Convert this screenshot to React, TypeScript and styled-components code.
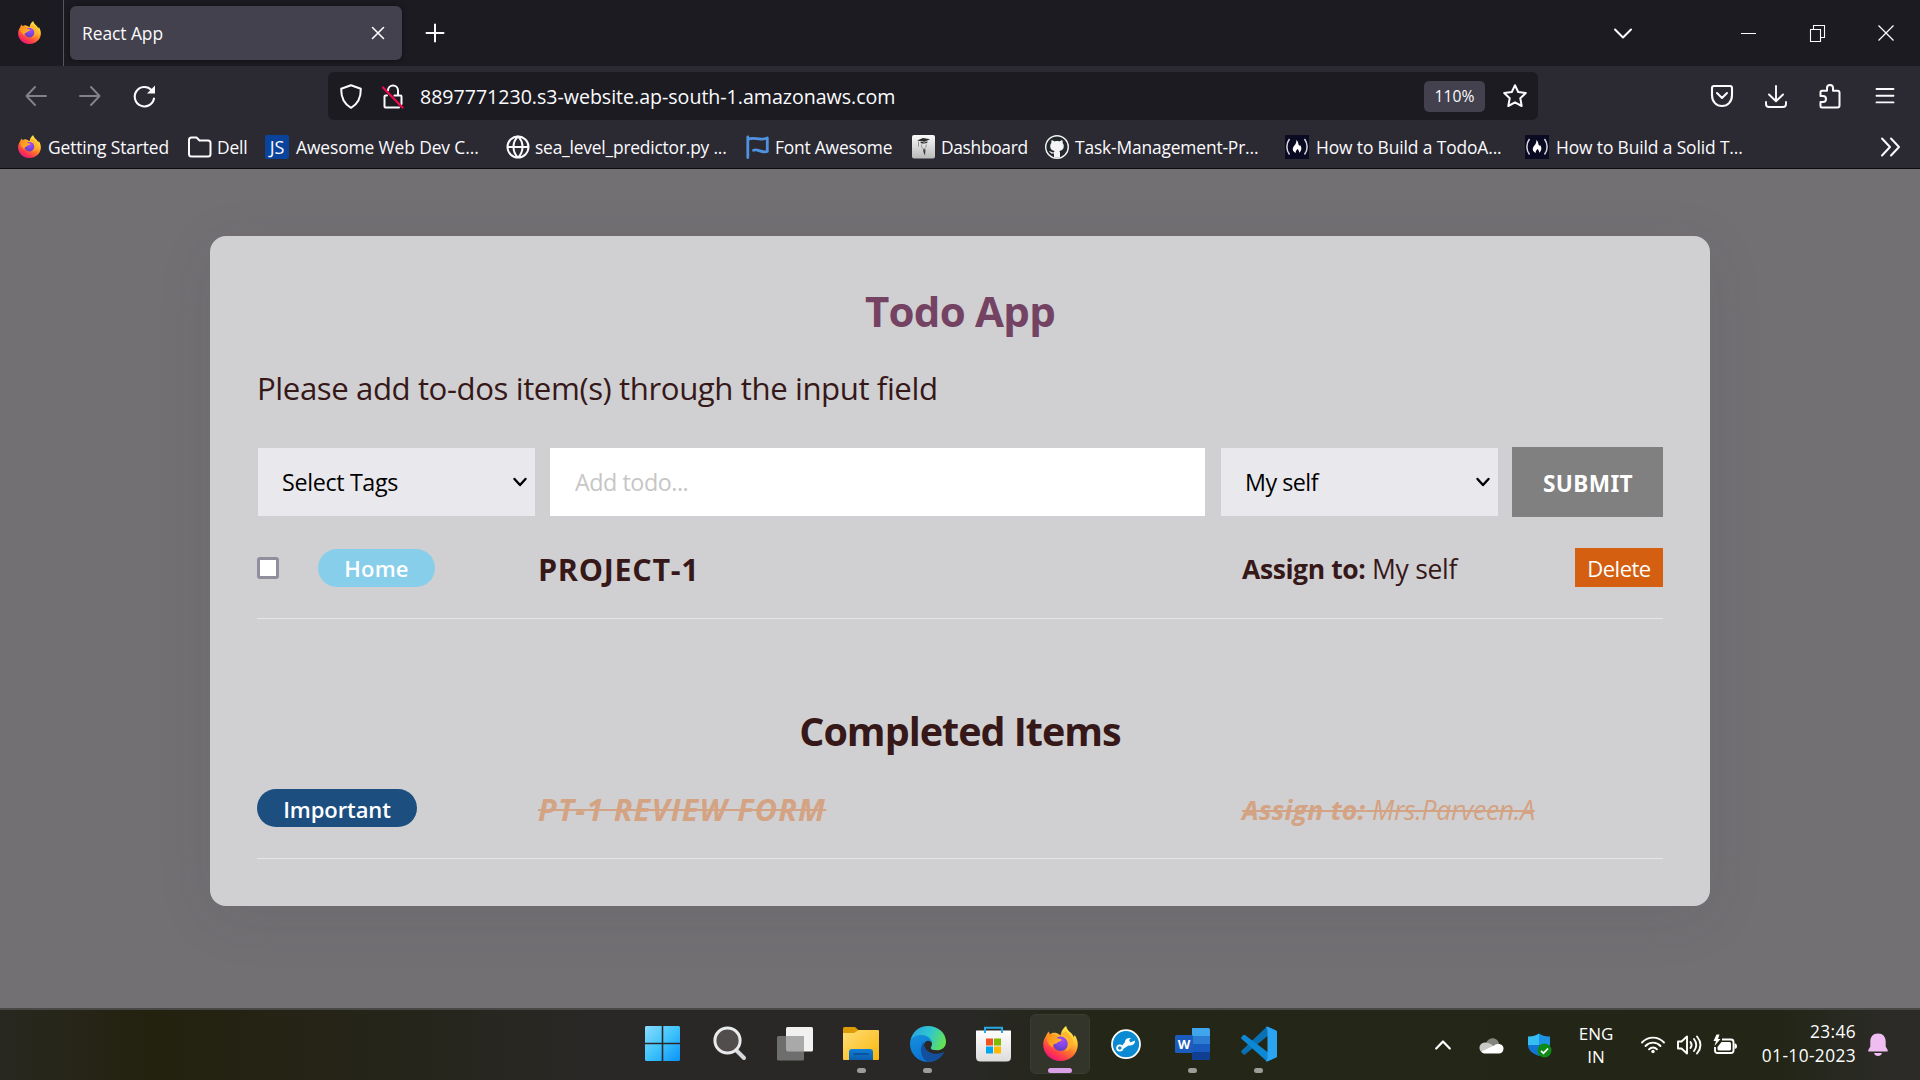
import React from 'react';
import styled, { createGlobalStyle, css } from 'styled-components';

const GlobalStyle = createGlobalStyle`
  * { box-sizing: border-box; }
  body { margin: 0; overflow: hidden; background: #727073; font-family: "Open Sans", "Noto Sans", sans-serif; }
  h1, h2, p { margin: 0; }
  svg { display: block; flex: none; overflow: visible; }
`;

/* ---------- shared ---------- */
const Screen = styled.div`
  width: 1920px;
  height: 1080px;
  display: flex;
  flex-direction: column;
`;

const Label = styled.span<{ $size: number; $ls?: number }>`
  font-size: ${(p) => p.$size}px;
  letter-spacing: ${(p) => p.$ls ?? 0}px;
  white-space: nowrap;
`;

const Cell = styled.div<{ $w: number; $dim?: boolean }>`
  width: ${(p) => p.$w}px;
  height: 100%;
  flex: none;
  display: flex;
  align-items: center;
  justify-content: center;
  opacity: ${(p) => (p.$dim ? 0.42 : 1)};
`;

/* ---------- browser chrome ---------- */
const TabBar = styled.header`
  height: 66px;
  background: #1c1b22;
  color: #fbfbfe;
  display: flex;
  align-items: center;
`;

const Pinned = styled.div`
  width: 64px;
  height: 66px;
  padding: 21px 0 0 18px;
  border-right: 1px solid #55545c;
`;

const Tab = styled.div`
  width: 332px;
  height: 54px;
  margin-left: 6px;
  padding: 0 17px 0 12px;
  border-radius: 6px;
  background: #42414d;
  box-shadow: 0 0 5px rgba(0, 0, 0, 0.5);
  display: flex;
  align-items: center;
  justify-content: space-between;
`;

const ListTabs = styled(Cell)`
  margin-left: auto;
  margin-right: 67px;
`;

const NavBar = styled.nav`
  height: 60px;
  padding: 0 9px;
  background: #2b2a33;
  color: #fbfbfe;
  display: flex;
  align-items: center;
`;

const UrlBar = styled.div`
  width: 1210px;
  height: 48px;
  margin-left: 157px;
  margin-right: auto;
  padding-left: 2px;
  border-radius: 6px;
  background: #1c1b22;
  display: flex;
  align-items: center;
`;

const Url = styled(Label)`
  margin-left: 6px;
  padding-top: 1px;
  flex: 1;
`;

const ZoomChip = styled.div`
  width: 61px;
  height: 31px;
  margin-right: 7px;
  border-radius: 5px;
  background: #42414d;
  display: flex;
  align-items: center;
  justify-content: center;
`;

const Bookmarks = styled.div`
  height: 43px;
  padding: 0 18px 1px;
  background: #2b2a33;
  border-bottom: 1px solid #0c0c0d;
  color: #fbfbfe;
  display: flex;
  align-items: center;
`;

const Bookmark = styled.div<{ $w: number; $gap?: number }>`
  width: ${(p) => p.$w}px;
  display: flex;
  align-items: center;
  gap: ${(p) => p.$gap ?? 6}px;
`;

const MarkLabel = styled(Label)`
  padding-top: 1px;
`;

const JsTile = styled.div`
  width: 24px;
  height: 24px;
  border-radius: 2px;
  background: #0a439b;
  display: flex;
  align-items: center;
  justify-content: center;
  font-size: 18px;
  flex: none;
`;

const More = styled.div`
  margin-left: auto;
  padding-right: 1px;
`;

/* ---------- page ---------- */
const Page = styled.main`
  flex: 1;
  padding-top: 67px;
  display: flex;
  justify-content: center;
  align-items: flex-start;
`;

const Card = styled.section`
  width: 1500px;
  height: 670px;
  padding: 46px 47px 47px;
  border-radius: 16px;
  background: #d0d0d2;
  color: #371819;
  box-shadow: 0 12px 60px rgba(56, 58, 62, 0.09);
`;

const Title = styled.h1`
  font-size: 42px;
  line-height: 58px;
  letter-spacing: -0.75px;
  text-align: center;
  color: #744263;
`;

const Hint = styled.p`
  margin-top: 24px;
  font-size: 31.2px;
  line-height: 48px;
  letter-spacing: -0.42px;
`;

const Form = styled.form`
  height: 70px;
  margin: 35px 0 0 1px;
  display: grid;
  grid-template-columns: 277px 1fr 277px 151px;
  column-gap: 15px;
  align-items: center;
`;

const field = css`
  height: 68px;
  padding: 0 8px 0 25px;
  display: flex;
  align-items: center;
  justify-content: space-between;
`;

const Select = styled.div<{ $shift?: number }>`
  ${field}
  margin-left: ${(p) => p.$shift ?? 0}px;
  margin-right: -${(p) => p.$shift ?? 0}px;
  padding-left: 24px;
  background: #e9e9ed;
  color: #000;
`;

const Input = styled.input`
  ${field}
  width: 100%;
  border: 0;
  background: #fff;
  font: 23.3px "Open Sans", "Noto Sans", sans-serif;
  letter-spacing: -0.45px;
  &::placeholder { color: #c6c6c6; opacity: 1; }
`;

const Submit = styled.button`
  height: 70px;
  border: 0;
  padding: 2px 0 0 1px;
  background: #808080;
  color: #fff;
  font: 700 22.6px "Noto Sans", sans-serif;
  letter-spacing: 0.4px;
`;

const Item = styled.div<{ $h: number }>`
  height: ${(p) => p.$h}px;
  border-bottom: 1px solid #e6e6e8;
  display: grid;
  grid-template-columns: 281px 703px 1fr;
  align-items: center;
`;

const TagCell = styled.div`
  display: flex;
  align-items: center;
`;

const Check = styled.span`
  width: 22px;
  height: 22px;
  margin-right: 39px;
  border: 3px solid #8f8f9d;
  border-radius: 3px;
  background: #fff;
`;

const Pill = styled.span<{ $w: number; $bg: string; $ls: number; $drop?: number }>`
  width: ${(p) => p.$w}px;
  height: 38px;
  border-radius: 19px;
  background: ${(p) => p.$bg};
  color: #fff;
  font-size: 22px;
  font-weight: 600;
  letter-spacing: ${(p) => p.$ls}px;
  line-height: 39px;
  padding-top: ${(p) => p.$drop ?? 0}px;
  text-align: center;
`;

const doneStyle = css`
  color: #d3a383;
  font-style: italic;
  text-decoration: line-through;
  text-decoration-thickness: 2px;
`;

const Task = styled.div<{ $done?: boolean }>`
  font-size: 30.5px;
  font-weight: 700;
  line-height: 44px;
  padding-top: ${(p) => (p.$done ? 1 : 3)}px;
  letter-spacing: ${(p) => (p.$done ? 1.28 : 0.7)}px;
  ${(p) => p.$done && doneStyle}
`;

const Assign = styled.div`
  display: flex;
  align-items: center;
  justify-content: space-between;
`;

const Assignee = styled.div<{ $done?: boolean }>`
  font-size: 26.5px;
  line-height: 38px;
  padding: 3px 0 0 1px;
  letter-spacing: -0.3px;
  b { letter-spacing: ${(p) => (p.$done ? 0.27 : -0.4)}px; }
  ${(p) => p.$done && doneStyle}
`;

const Delete = styled.button`
  width: 88px;
  height: 39px;
  padding: 0;
  border: 0;
  background: #d45f10;
  color: #fff;
  font: 22px "Open Sans", "Noto Sans", sans-serif;
  letter-spacing: -0.5px;
`;

const Completed = styled.h2`
  margin-top: 85px;
  padding-top: 1px;
  font-size: 39.5px;
  line-height: 53px;
  letter-spacing: -1px;
  text-align: center;
`;

/* ---------- taskbar ---------- */
const Taskbar = styled.footer`
  height: 72px;
  border-top: 2px solid #484846;
  background: linear-gradient(90deg, #292820 0, #23220f 150px, #26251b 420px, #292827 600px, #292827 960px, #242617 1080px, #232616 1780px, #2c2b28 1890px);
  color: #fff;
  display: flex;
`;

const Apps = styled.div`
  padding: 4px 0 0 632.5px;
  display: flex;
  gap: 6.25px;
`;

const AppCell = styled.div<{ $active?: boolean }>`
  width: 60px;
  height: 60px;
  border-radius: 6px;
  border: 1px solid ${(p) => (p.$active ? '#3b3d31' : 'transparent')};
  background: ${(p) => (p.$active ? '#33352a' : 'transparent')};
  padding-top: 11px;
  display: flex;
  flex-direction: column;
  align-items: center;
  justify-content: space-between;
`;

const Running = styled.i<{ $active?: boolean }>`
  width: ${(p) => (p.$active ? 24 : 9)}px;
  height: 5px;
  border-radius: 3px;
  background: ${(p) => (p.$active ? '#d9a0e6' : '#9c9c98')};
`;

const Nudge = styled.div`
  padding-left: 3px;
`;

const Tray = styled.div`
  margin-left: auto;
  padding: 0 32px 0 0;
  display: flex;
  align-items: center;
`;

const Gap = styled.div<{ $l: number }>`
  margin-left: ${(p) => p.$l}px;
`;

const Lines = styled.div<{ $l: number; $w: number; $align: string; $size: number; $ls: number; $lh: number; $up: number }>`
  width: ${(p) => p.$w}px;
  margin-left: ${(p) => p.$l}px;
  padding-bottom: ${(p) => p.$up}px;
  text-align: ${(p) => p.$align};
  font-size: ${(p) => p.$size}px;
  line-height: ${(p) => p.$lh}px;
  letter-spacing: ${(p) => p.$ls}px;
  white-space: nowrap;
`;

/* ---------- icons ---------- */
type LineProps = { w: number; h: number; d: string; sw?: number; color?: string; round?: boolean };
const Line = ({ w, h, d, sw = 2, color = 'currentColor', round = true }: LineProps) => (
  <svg width={w} height={h} viewBox={`0 0 ${w} ${h}`} fill="none" stroke={color} strokeWidth={sw}
    strokeLinecap={round ? 'round' : 'butt'} strokeLinejoin={round ? 'round' : 'miter'}>
    <path d={d} />
  </svg>
);

const Firefox = ({ size, id }: { size: number; id: string }) => (
  <svg width={size} height={size} viewBox="0 0 34 34">
    <defs>
      <linearGradient id={id + 'a'} x1="0.85" y1="0.05" x2="0.25" y2="1">
        <stop offset="0" stopColor="#fff44f" />
        <stop offset="0.3" stopColor="#ffc233" />
        <stop offset="0.55" stopColor="#ff7a2a" />
        <stop offset="0.8" stopColor="#ff3750" />
        <stop offset="1" stopColor="#eb0f80" />
      </linearGradient>
      <radialGradient id={id + 'b'} cx="0.6" cy="0.25" r="0.8">
        <stop offset="0" stopColor="#a84bf0" />
        <stop offset="0.55" stopColor="#7b45e6" />
        <stop offset="1" stopColor="#5a3fb8" />
      </radialGradient>
      <linearGradient id={id + 'c'} x1="0" y1="0" x2="1" y2="0.6">
        <stop offset="0" stopColor="#ff8a16" />
        <stop offset="1" stopColor="#ffb52e" />
      </linearGradient>
    </defs>
    <path fill={`url(#${id}a)`} d="M3 9.5C3.6 7.6 4.600 6.300 5.800 5.300C5.900 6.600 6.400 7.400 7 7.900C8.500 6.600 10.500 6.200 12 6.600C13.500 6.800 15 7.600 16 8.500L17.500 9C17.300 5.500 19.500 2 22.600 0C22.800 2.500 24.500 4.500 27 6.500C28.500 7.800 29.500 9.500 30 11L30.800 8.800C33 12 34 15.500 33.800 19C33.200 28 26 34 17 34C7.500 34 0.200 27 0.200 18C0.200 14.800 1.200 12 3 9.500Z" />
    <circle cx="17" cy="17.300" r="7" fill={`url(#${id}b)`} />
    <path fill={`url(#${id}c)`} d="M3 9.500C5 8.500 7 7.600 9 8.500C10.500 9.200 12 9.600 14 9.400C13.500 10.400 13.300 11.200 13.800 12C15 12.200 17.500 12.600 18.400 13.400C17.500 14.900 14.500 15.300 13.800 16C13.500 17.200 12.600 17.200 11.500 17.300C9.500 17.800 9 19.400 9.600 21C5 18.500 3 14 3 9.500Z" />
    <path fill="#ffb02b" opacity="0.75" d="M16.500 9C20.500 8.600 24 11 24.800 15C25.400 19 23.500 22.500 20.500 24.500C26 24 29.500 19.500 29 14.500C28.400 10 24.500 7.500 22 5C20 6 18 7 16.500 9Z" />
  </svg>
);

const Fcc = () => (
  <svg width="24" height="24" viewBox="0 0 24 24">
    <rect width="24" height="24" fill="#0a0a23" />
    <path d="M4.500 4C1 8.500 1 15 4.500 19.500M19.500 4C23 8.500 23 15 19.500 19.500" stroke="#d8d8e2" strokeWidth="1.500" fill="none" />
    <path d="M11.300 5C14 7 12.800 9 14.300 10.800C14.800 11 15 10.500 14.800 9.800C17 12 17 16 14 17.800C14.400 16 13.500 15.200 12.600 14C11.500 15 10.400 16.300 10.800 17.900C7.300 16.500 7 13.500 9 11C10.500 9.200 11.700 7.300 11.300 5Z" fill="#fff" />
  </svg>
);

const GithubIcon = () => (
  <svg width="24" height="24" viewBox="0 0 24 24">
    <circle cx="12" cy="12" r="11.300" fill="#24292e" stroke="#f4f4f6" strokeWidth="1.400" />
    <path fill="#f4f4f6" d="M9 22.500V18.500C5.500 19 5.500 17 4 16.400C6 16 6.500 17.800 9 17.300C9 16.700 9.300 16.200 9.700 15.900C7 15.500 5.200 14.300 5.200 11.200C5.200 9.900 5.600 8.900 6.400 8.100C6.200 7.200 6.200 6.200 6.600 5.200C7.600 5.200 8.700 5.900 9.500 6.400C11 6 13 6 14.500 6.400C15.300 5.900 16.400 5.200 17.400 5.200C17.800 6.200 17.800 7.200 17.600 8.100C18.400 8.900 18.800 9.900 18.800 11.200C18.800 14.300 17 15.500 14.300 15.900C14.800 16.400 15 17 15 17.800V22.500Z" />
  </svg>
);

const DashboardIcon = () => (
  <svg width="23" height="24" viewBox="0 0 23 24">
    <defs>
      <linearGradient id="dash" x1="0" y1="0" x2="0" y2="1"><stop offset="0" stopColor="#fafafa" /><stop offset="1" stopColor="#b9b9b9" /></linearGradient>
    </defs>
    <rect width="23" height="23.500" rx="2" fill="url(#dash)" />
    <path d="M5 5.500L11 3L18 4.300L12.500 6.800ZM8.500 6.800L12.500 7.600L15.500 6.300L15.300 7.800C13.500 8.800 10.500 8.700 8.700 8Z" fill="#2b2b2b" />
    <path d="M6.500 6.500V11.500M9.500 9.500C9.300 12 10.500 13.700 11.800 14.300C13.500 13.500 14.300 12 14.300 9.500" stroke="#8a8a8a" strokeWidth="0.900" fill="none" />
    <path d="M11.300 14L13.500 14.500L13 20.500L11.300 17Z" fill="#3c3c3c" />
  </svg>
);

const WindowsIcon = () => (
  <svg width="35" height="35" viewBox="0 0 35 35">
    <defs><linearGradient id="win" gradientUnits="userSpaceOnUse" x1="0" y1="0" x2="35" y2="35"><stop offset="0" stopColor="#8adcff" /><stop offset="0.5" stopColor="#3fc3fb" /><stop offset="1" stopColor="#0a93fb" /></linearGradient></defs>
    <path fill="url(#win)" d="M1 0H16.700V16.700H0V1ZM18.300 0H34L35 1V16.700H18.300ZM0 18.300H16.700V35H1L0 34ZM18.300 18.300H35V34L34 35H18.300Z" />
  </svg>
);

const SearchIcon = () => (
  <svg width="34" height="35" viewBox="0 0 34 35">
    <path d="M23.500 24.500L31 32" stroke="#d5d8dc" strokeWidth="4" strokeLinecap="round" />
    <circle cx="14.500" cy="14.500" r="12.600" fill="#514d4c" stroke="#e9eaec" strokeWidth="3" />
  </svg>
);

const TaskViewIcon = () => (
  <svg width="36" height="35" viewBox="0 0 36 35">
    <rect x="9" y="1" width="27" height="24.500" rx="1.500" fill="#f1f1f1" />
    <rect x="0" y="10" width="27" height="24.500" rx="1.500" fill="#6e6e6e" />
    <path d="M9 10H27V25.500H10.500L9 24Z" fill="#a9a9a9" />
  </svg>
);

const ExplorerIcon = () => (
  <svg width="36" height="35" viewBox="0 0 36 35">
    <defs><linearGradient id="fold" x1="0" y1="0" x2="1" y2="1"><stop offset="0" stopColor="#ffdf76" /><stop offset="1" stopColor="#f9b50c" /></linearGradient>
      <linearGradient id="foldb" x1="0" y1="0" x2="0" y2="1"><stop offset="0" stopColor="#0f7fd8" /><stop offset="1" stopColor="#0b5ead" /></linearGradient></defs>
    <path d="M0 2.500Q0 1 1.500 1H12L16 4.500V9H0Z" fill="#dd9b04" />
    <path d="M0 7H11L15.500 4H35Q36 4 36 5V33Q36 34 35 34H1Q0 34 0 33Z" fill="url(#fold)" />
    <path d="M6 34V26Q6 23 9 23H27Q30 23 30 26V34Z" fill="url(#foldb)" />
    <path d="M11 28H25" stroke="#0b4a8c" strokeWidth="1.500" strokeLinecap="round" />
  </svg>
);

const EdgeIcon = () => (
  <svg width="36" height="36" viewBox="0 0 36 36">
    <defs>
      <linearGradient id="edg" x1="0" y1="0.300" x2="1" y2="0.600"><stop offset="0" stopColor="#2aa5e0" /><stop offset="0.500" stopColor="#2fc6cf" /><stop offset="1" stopColor="#66e34e" /></linearGradient>
      <linearGradient id="edb" x1="0" y1="0" x2="0.500" y2="1"><stop offset="0" stopColor="#1592de" /><stop offset="1" stopColor="#0a6fd0" /></linearGradient>
    </defs>
    <path fill="url(#edb)" d="M0.500 14C4 8 12 7 17 9.500C21 11.500 22 14 21.500 17C20 13.500 14.500 14 14 19C14 25 19.500 30 27 28.500C30 28 32 27 33.500 26.500C31 32 25 36 18 36C8 36 0 28 0 18C0 16.500 0.200 15 0.500 14Z" />
    <path fill="#134f9c" d="M14 16C9 21 10 31 17.500 36C25 36 31 32 33.700 27.200C34 26.300 33.400 26 32.700 26.400C25 30 15.500 26.500 14 19Z" />
    <path fill="url(#edg)" d="M0.500 14.500C2 6 9 0 18 0C28 0 36 7 36 15.500C36 21.500 31.500 24.300 27 24.300C23 24.300 20.800 23.300 20.800 22C20.800 21 22 20.300 22 17.800C22 13 17.500 9 11.500 9C6.500 9 2.500 11 0.500 14.500Z" />
  </svg>
);

const StoreIcon = () => (
  <svg width="35" height="36" viewBox="0 0 35 36">
    <defs><linearGradient id="sto" x1="0" y1="0" x2="0" y2="1"><stop offset="0" stopColor="#fff" /><stop offset="1" stopColor="#dcdcdc" /></linearGradient></defs>
    <path d="M0 5Q0 4.500 0.500 4.500H34.500Q35 4.500 35 5V31Q35 35.500 30.500 35.500H4.500Q0 35.500 0 31Z" fill="url(#sto)" />
    <path d="M9 7V1.800H26V7" stroke="#27a9e8" strokeWidth="2" fill="none" />
    <path d="M10 12.500H17V19.500H10Z" fill="#f25022" /><path d="M18 12.500H25V19.500H18Z" fill="#7fba00" />
    <path d="M10 20.500H17V27.500H10Z" fill="#00a4ef" /><path d="M18 20.500H25V27.500H18Z" fill="#ffb900" />
  </svg>
);

const WrenchIcon = () => (
  <svg width="30" height="36" viewBox="0 0 30 36">
    <circle cx="15" cy="18.200" r="14" fill="#0a8ad2" stroke="#fff" strokeWidth="1.800" />
    <circle cx="8.800" cy="22" r="2.700" fill="none" stroke="#fff" strokeWidth="1.800" />
    <path d="M10.500 20.500L14 16C14 13 16.500 11.500 20 12L18 14L19.500 16.500L24 14.500C24.500 18 21 20 17.500 19.500L12 23Z" fill="#fff" />
  </svg>
);

const WordTile = styled.div`
  width: 35px;
  height: 32px;
  margin-top: 2px;
  padding: 7px 0;
  border-radius: 1.5px;
  background: linear-gradient(#41a5ee 25%, #2b7cd3 25% 50%, #185abd 50% 75%, #103f91 75%) 17px 0 / 18px 100% no-repeat;
`;
const WordBadge = styled.div`
  width: 18px;
  height: 18px;
  border-radius: 1.5px;
  background: #1b5cbe;
  color: #fff;
  font-size: 13px;
  font-weight: 700;
  line-height: 18px;
  text-align: center;
`;

const CodeIcon = () => (
  <svg width="36" height="36" viewBox="0 0 36 36">
    <path d="M26 0.500L35 4.500Q36 5 36 6V12L26.500 10L4 28.500Q3 29 2 28L0.500 26.500Q-0.300 25.500 0.700 24.500Z" fill="#0a70b4" />
    <path d="M26 35.500L35 31.500Q36 31 36 30V24L26.500 26L4 9Q3 8.500 2 9.300L0.500 11Q-0.300 12 0.700 13Z" fill="#0c88d4" />
    <path d="M26 0.500L35 4.500Q36 5 36 6V30Q36 31 35 31.500L26 35.500Q24.500 36 25.500 34Q26.500 33.500 26.500 32V4Q26.500 2.500 25 1.500Z" fill="#2ba5f2" />
  </svg>
);

const CloudIcon = () => (
  <svg width="25" height="17" viewBox="0 0 25 17">
    <path d="M7 6.500C8 2 14 -1 18 3C19.500 4.500 20 6 20 7L14 9Z" fill="#85857d" />
    <path d="M1.500 14C-1 10 1.500 5.500 6 5.500C10 5 13 8 16 10L3 15.500Z" fill="#c9c9c5" />
    <path d="M2.500 14.500L15 8.500C20 5 25 8 24.500 12C24.300 15 22 16.500 20 16.500H6C4.500 16.500 3 16 2.500 14.500Z" fill="#fff" />
  </svg>
);

const DefenderIcon = () => (
  <svg width="24" height="25" viewBox="0 0 24 25">
    <path d="M0 3.500C4 3.800 8 2.500 11 0.500V12H0Z" fill="#36bdf4" />
    <path d="M11 0.500C14 2.500 18 3.800 22 3.500V12H11Z" fill="#1d93e4" />
    <path d="M0 12H11V23C4 20.500 0 17 0 12Z" fill="#1176d3" />
    <path d="M11 12H22C22 17 18 20.500 11 23Z" fill="#0a5cb4" />
    <circle cx="16.500" cy="17.500" r="7" fill="#0e8a16" />
    <path d="M13 17.800L15.500 20.200L20 15.500" stroke="#fff" strokeWidth="1.700" fill="none" />
  </svg>
);

const WifiIcon = () => (
  <svg width="24" height="18" viewBox="0 0 24 18" fill="none" stroke="#fff" strokeWidth="1.900" strokeLinecap="round">
    <path d="M1 6.500C7 0 17 0 23 6.500M4.500 10C8.500 5.500 15.500 5.500 19.500 10M8 13.300C10.200 10.800 13.800 10.800 16 13.300" />
    <circle cx="12" cy="15.500" r="1.700" fill="#fff" stroke="none" />
  </svg>
);

const SpeakerIcon = () => (
  <svg width="24" height="20" viewBox="0 0 24 20" fill="none" stroke="#fff" strokeWidth="1.900" strokeLinecap="round" strokeLinejoin="round">
    <path d="M1 6.500H4.500L10 1.500V18.500L4.500 13.500H1ZM13.500 7C15 9 15 11 13.500 13M17 4C20 8 20 12 17 16M20 1.500C24.500 7 24.500 13 20 18.500" />
  </svg>
);

const BatteryIcon = () => (
  <svg width="24" height="20" viewBox="0 0 24 20">
    <path d="M9 4.500H18Q20.500 4.500 20.500 7V15.500Q20.500 18 18 18H4.500Q2 18 2 15.500V12" fill="none" stroke="#fff" strokeWidth="1.900" />
    <path d="M8.500 7H16.500Q18 7 18 8.500V14Q18 15.500 16.500 15.500H6Q4.500 15.500 4.500 14V12Z" fill="#fff" />
    <path d="M21.500 8.500H22.500Q24 9 24 11.200Q24 13.500 22.500 13.800H21.500Z" fill="#fff" />
    <path d="M3.500 -0.500L0.500 6H3L1.500 11L7.500 4H5L6.500 -0.500Z" fill="#fff" />
  </svg>
);

const BellIcon = () => (
  <svg width="20" height="24" viewBox="0 0 20 24">
    <path d="M10 0.500C5 0.500 2.300 4 2.300 8.500V13.500L0.300 17V18.500H19.700V17L17.700 13.500V8.500C17.700 4 15 0.500 10 0.500ZM6 20H14C13.500 22 12 23 10 23S6.500 22 6 20Z" fill="#f0bdf3" />
  </svg>
);

const Chevron = () => <Line w={14} h={9} d="M1.500 1L7 7L12.500 1" sw={2.4} color="#000" />;

const marks: { text: string; w: number; ls: number; gap?: number; icon: React.ReactNode }[] = [
  { text: 'Getting Started', w: 170, ls: -0.13, gap: 7, icon: <Firefox size={23} id="fb" /> },
  { text: 'Dell', w: 77, ls: -0.2, gap: 5, icon: <Line w={24} h={24} d="M3.500 2.500H8.500L11.500 5.500H20Q22.500 5.500 22.500 8V19Q22.500 21.500 20 21.500H3.500Q1 21.500 1 19V5Q1 2.500 3.500 2.500Z" /> },
  { text: 'Awesome Web Dev C...', w: 241, ls: -0.1, gap: 7, icon: <JsTile>JS</JsTile> },
  { text: 'sea_level_predictor.py ...', w: 240, ls: -0.2, gap: 5, icon: <Line w={24} h={24} d="M12 1.500A10.500 10.500 0 1 0 12 22.500A10.500 10.500 0 1 0 12 1.500ZM12 1.500C6 7 6 17 12 22.500C18 17 18 7 12 1.500M1.500 12H22.500" /> },
  { text: 'Font Awesome', w: 166, ls: -0.2, icon: <Line w={23} h={24} color="#4f93e0" sw={2.8} d="M1.800 2V22.500M1.800 4.500C8 1 13 6.500 21.300 3V16.500C16 18.500 12 13.500 7.500 15.200" /> },
  { text: 'Dashboard', w: 133, ls: -0.33, icon: <DashboardIcon /> },
  { text: 'Task-Management-Pr...', w: 240, ls: -0.16, icon: <GithubIcon /> },
  { text: 'How to Build a TodoA...', w: 240, ls: -0.12, gap: 7, icon: <Fcc /> },
  { text: 'How to Build a Solid T...', w: 240, ls: -0.12, gap: 7, icon: <Fcc /> },
];

const apps: { icon: React.ReactNode; running?: boolean; active?: boolean }[] = [
  { icon: <WindowsIcon /> },
  { icon: <Nudge><SearchIcon /></Nudge> },
  { icon: <TaskViewIcon /> },
  { icon: <ExplorerIcon />, running: true },
  { icon: <EdgeIcon />, running: true },
  { icon: <StoreIcon /> },
  { icon: <Firefox size={35} id="ft" />, running: true, active: true },
  { icon: <WrenchIcon /> },
  { icon: <WordTile><WordBadge>W</WordBadge></WordTile>, running: true },
  { icon: <CodeIcon />, running: true },
];

export default function App() {
  return (
    <Screen>
      <GlobalStyle />
      <TabBar>
        <Pinned><Firefox size={23} id="fp" /></Pinned>
        <Tab>
          <Label $size={17.4} $ls={-0.05}>React App</Label>
          <Line w={14} h={14} d="M1.500 1.500L12.500 12.500M12.500 1.500L1.500 12.500" sw={1.6} />
        </Tab>
        <Cell $w={65}><Line w={18} h={18} d="M9 0.500V17.500M0.500 9H17.500" /></Cell>
        <ListTabs $w={48}><Line w={18} h={11} d="M1 1.500L9 9.500L17 1.500" /></ListTabs>
        <Cell $w={68.67}><Line w={15} h={1} d="M0 0.500H15" sw={1} round={false} /></Cell>
        <Cell $w={68.67}><Line w={15} h={17} d="M0.500 4.500H10.500V16.500H0.500ZM3.500 4V0.500H14.500V12.500H11" sw={1.1} round={false} /></Cell>
        <Cell $w={68.66}><Line w={16} h={16} d="M0.500 0.500L15.500 15.500M15.500 0.500L0.500 15.500" sw={1.3} round={false} /></Cell>
      </TabBar>
      <NavBar>
        <Cell $w={54} $dim><Line w={22} h={20} d="M21 10H1.500M10 1L1.500 10L10 19" sw={1.9} /></Cell>
        <Cell $w={54} $dim><Line w={22} h={20} d="M1 10H20.500M12 1L20.500 10L12 19" sw={1.9} /></Cell>
        <Cell $w={54}>
          <svg width="23" height="23" viewBox="0 0 23 23">
            <path d="M18.500 5A9.700 9.700 0 1 0 21 13.500" fill="none" stroke="currentColor" strokeWidth="2.100" strokeLinecap="round" />
            <path d="M22 0.500V8.500H14Z" fill="currentColor" />
          </svg>
        </Cell>
        <UrlBar>
          <Cell $w={42}><Line w={22} h={25} d="M11 1.200L20.800 4.800C21 14 18 20 11 23.800C4 20 1 14 1.200 4.800Z" /></Cell>
          <Cell $w={42}>
            <svg width="22" height="25" viewBox="0 0 22 25" fill="none" strokeLinecap="round">
              <path d="M6 6.500A5 5 0 0 1 16 6.500V10.500M5 11.500H3.500Q2.500 11.500 2.500 12.500V22.500Q2.500 23.500 3.500 23.500H17M12.500 11.500H18.500Q19.500 11.500 19.500 12.500V20" stroke="currentColor" strokeWidth="2" />
              <path d="M1 3.500L20.500 23.500" stroke="#f5094e" strokeWidth="2.200" />
            </svg>
          </Cell>
          <Url $size={19.6} $ls={-0.02}>8897771230.s3-website.ap-south-1.amazonaws.com</Url>
          <ZoomChip><Label $size={15.7}>110%</Label></ZoomChip>
          <Cell $w={46}><Line w={24} h={24} d="M12 1.200L15.200 8L22.800 9L17.300 14.300L18.700 22L12 18.300L5.300 22L6.700 14.300L1.200 9L8.800 8Z" /></Cell>
        </UrlBar>
        <Cell $w={54}><Line w={22} h={22} d="M3 1H19Q21 1 21 3V10C21 17 16.500 21 11 21S1 17 1 10V3Q1 1 3 1ZM6 8L11 13L16 8" sw={2.1} /></Cell>
        <Cell $w={53}><Line w={22} h={23} d="M11 1V16M4 9.500L11 16.300L18 9.500M1 17V19Q1 22 4 22H18Q21 22 21 19V17" sw={1.9} /></Cell>
        <Cell $w={56}><Line w={22} h={25} d="M3 6.800H8V4A3 3 0 0 1 14 4V6.800H18.500Q20.500 6.800 20.500 8.800V21.500Q20.500 23.500 18.500 23.500H3Q1.500 23.500 1.500 22V18H4A3 3 0 0 0 4 12H1.500V8.300Q1.500 6.800 3 6.800Z" /></Cell>
        <Cell $w={53}><Line w={18} h={16} d="M0.500 1H17.500M0.500 7.700H17.500M0.500 14.400H17.500" sw={1.9} /></Cell>
      </NavBar>
      <Bookmarks>
        {marks.map((m) => (
          <Bookmark key={m.text} $w={m.w} $gap={m.gap}>
            {m.icon}
            <MarkLabel $size={17.4} $ls={m.ls}>{m.text}</MarkLabel>
          </Bookmark>
        ))}
        <More><Line w={21} h={20} d="M2 1.500L10 10L2 18.500M11 1.500L19 10L11 18.500" /></More>
      </Bookmarks>

      <Page>
        <Card>
          <Title>Todo App</Title>
          <Hint>Please add to-dos item(s) through the input field</Hint>
          <Form>
            <Select><Label $size={23.3} $ls={-0.35}>Select Tags</Label><Chevron /></Select>
            <Input placeholder="Add todo..." />
            <Select $shift={1}><Label $size={23.3} $ls={-0.5}>My self</Label><Chevron /></Select>
            <Submit type="button">SUBMIT</Submit>
          </Form>
          <Item $h={102}>
            <TagCell><Check /><Pill $w={117} $bg="#87ceeb" $ls={0.2}>Home</Pill></TagCell>
            <Task>PROJECT-1</Task>
            <Assign>
              <Assignee><b>Assign to:</b> My self</Assignee>
              <Delete>Delete</Delete>
            </Assign>
          </Item>
          <Completed>Completed Items</Completed>
          <Item $h={101}>
            <TagCell><Pill $w={160} $bg="#1d4e80" $ls={-0.1} $drop={1}>Important</Pill></TagCell>
            <Task $done>PT-1 REVIEW FORM</Task>
            <Assign><Assignee $done><b>Assign to:</b> Mrs.Parveen.A</Assignee></Assign>
          </Item>
        </Card>
      </Page>

      <Taskbar>
        <Apps>
          {apps.map((a, i) => (
            <AppCell key={i} $active={a.active}>
              {a.icon}
              {a.running && <Running $active={a.active} />}
            </AppCell>
          ))}
        </Apps>
        <Tray>
          <Line w={16} h={10} d="M1.200 8.500L8 1.500L14.800 8.500" sw={2.2} />
          <Gap $l={28}><CloudIcon /></Gap>
          <Gap $l={24}><DefenderIcon /></Gap>
          <Lines $l={26} $w={36} $align="center" $size={17} $ls={-0.1} $lh={23} $up={0}>ENG<br />IN</Lines>
          <Gap $l={27}><WifiIcon /></Gap>
          <Gap $l={12}><SpeakerIcon /></Gap>
          <Gap $l={12}><BatteryIcon /></Gap>
          <Lines $l={23} $w={96} $align="right" $size={17.3} $ls={0.4} $lh={24} $up={2}>23:46<br />01-10-2023</Lines>
          <Gap $l={12}><BellIcon /></Gap>
        </Tray>
      </Taskbar>
    </Screen>
  );
}
